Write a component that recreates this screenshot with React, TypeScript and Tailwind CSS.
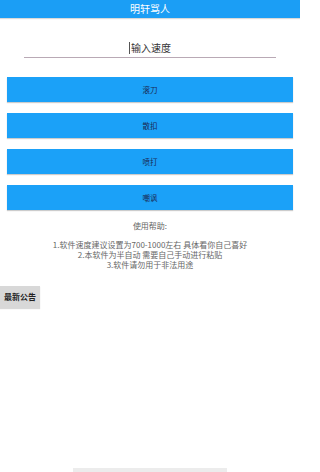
import React from "react";

const font = { fontFamily: '"Noto Sans CJK SC", "Noto Sans", sans-serif' };

export default function App() {
  const buttons = ["滚刀", "散扣", "喷打", "嘲讽"];
  return (
    <div className="w-[300px] h-[472px] bg-white flex flex-col overflow-hidden" style={font}>
      <div className="h-[18px] bg-[#1b9ef5] flex items-center justify-center text-[10px] text-white leading-none shadow-[0_1px_1px_rgba(0,0,0,0.15)]">
        明轩骂人
      </div>
      <div className="mt-[23px] mx-[24px] h-[17px] border-b border-[#b9a9b5] flex items-start justify-center">
        <div className="flex items-center text-[10px] leading-[14px] text-[#333]">
          <span className="w-px h-[12px] bg-[#555] mr-px"></span>
          输入速度
        </div>
      </div>
      <div className="mt-[19px] mx-[7px] flex flex-col gap-[11px]">
        {buttons.map((b) => (
          <div
            key={b}
            className="h-[25px] bg-[#1ba1f8] flex items-center justify-center text-[7.5px] text-[#1a2a55] shadow-[0_1px_1px_rgba(0,0,0,0.2)]"
          >
            {b}
          </div>
        ))}
      </div>
      <div className="mt-[11px] flex flex-col items-center text-[8px] text-[#666] leading-[10px]">
        <div>使用帮助:</div>
        <div className="mt-[9px] text-center">
          <div>1.软件速度建议设置为700-1000左右 具体看你自己喜好</div>
          <div>2.本软件为半自动 需要自己手动进行粘贴</div>
          <div>3.软件请勿用于非法用途</div>
        </div>
      </div>
      <div className="mt-[16px] w-[40px] h-[22px] bg-[#d8d8d8] flex items-center justify-center text-[8px] font-bold text-[#222] shadow-[0_1px_1px_rgba(0,0,0,0.15)]">
        最新公告
      </div>
      <div className="mt-auto mx-auto w-[154px] h-[4px] bg-[#ececec]"></div>
    </div>
  );
}
